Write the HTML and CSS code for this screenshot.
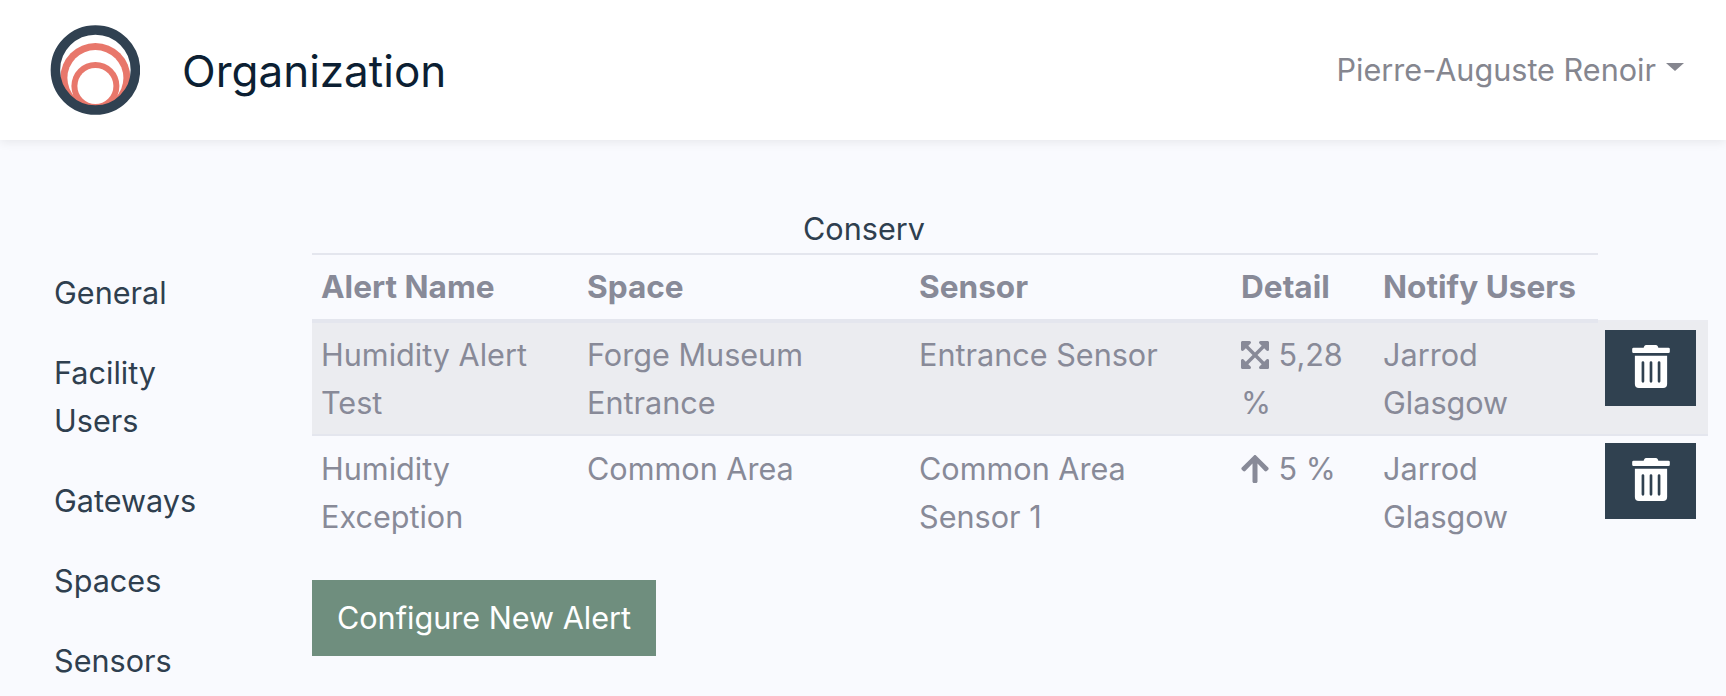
FILE: index.html

```html
<!DOCTYPE html>
<html lang="en">
<head>
  <meta charset="UTF-8" />
  <meta name="viewport" content="width=device-width, initial-scale=1.0"/>
  <title>Organization</title>
  <link rel="stylesheet" href="styles.css">
</head>
<body>
  <header class="topbar">
    <a class="brand" href="#">
      <svg class="brand-logo" viewBox="0 0 90 90" width="90" height="90">
        <circle cx="45.4" cy="53" r="35" fill="#e8776b"/>
        <circle cx="45.4" cy="53" r="28" fill="#fff"/>
        <circle cx="45.4" cy="61" r="24" fill="#e8776b"/>
        <circle cx="45.4" cy="61" r="18" fill="#fff"/>
        <circle cx="45.4" cy="45" r="40" fill="none" stroke="#304151" stroke-width="9.5"/>
      </svg>
      <span class="brand-name">Organization</span>
    </a>
    <a class="user-menu" href="#">Pierre-Auguste Renoir<span class="caret"></span></a>
  </header>

  <div class="page">
    <nav class="sidebar">
      <a href="#">General</a>
      <a href="#">Facility Users</a>
      <a href="#">Gateways</a>
      <a href="#">Spaces</a>
      <a href="#">Sensors</a>
    </nav>

    <main class="content">
      <div class="table-title">Conserv</div>
      <table class="alerts">
        <thead>
          <tr>
            <th class="col-name">Alert Name</th>
            <th class="col-space">Space</th>
            <th class="col-sensor">Sensor</th>
            <th class="col-detail">Detail</th>
            <th class="col-users">Notify Users</th>
            <th class="col-action"></th>
          </tr>
        </thead>
        <tbody>
          <tr class="hover">
            <td>Humidity Alert Test</td>
            <td>Forge Museum Entrance</td>
            <td>Entrance Sensor</td>
            <td>
              <svg class="icon" viewBox="0 0 448 512"><path d="M448.1 344v112c0 13.3-10.7 24-24 24h-112c-21.4 0-32.1-25.9-17-41l36.2-36.2L224 295.6 116.8 402.9 153 439c15.1 15.1 4.4 41-17 41H24c-13.3 0-24-10.7-24-24V344c0-21.4 25.9-32.1 41-17l36.2 36.2L184.5 256 77.2 148.7 41 185c-15.1 15.1-41 4.4-41-17V56c0-13.3 10.7-24 24-24h112c21.4 0 32.1 25.9 17 41l-36.2 36.2L224 216.4l107.3-107.3L295.1 73c-15.1-15.1-4.4-41 17-41h112c13.3 0 24 10.7 24 24v112c0 21.4-25.9 32.1-41 17l-36.2-36.2L263.6 256l107.3 107.3 36.2-36.2c15.1-15.2 41-4.5 41 16.9z"/></svg>
              5,28 %
            </td>
            <td>Jarrod Glasgow</td>
            <td class="action">
              <button class="btn-delete">
                <svg viewBox="0 0 448 512" width="38" height="43"><path d="M32 464a48 48 0 0 0 48 48h288a48 48 0 0 0 48-48V128H32zm272-256a16 16 0 0 1 32 0v224a16 16 0 0 1-32 0zm-96 0a16 16 0 0 1 32 0v224a16 16 0 0 1-32 0zm-96 0a16 16 0 0 1 32 0v224a16 16 0 0 1-32 0zM432 32H312l-9.4-18.7A24 24 0 0 0 281.1 0H166.8a23.72 23.72 0 0 0-21.4 13.3L136 32H16A16 16 0 0 0 0 48v32a16 16 0 0 0 16 16h416a16 16 0 0 0 16-16V48a16 16 0 0 0-16-16z"/></svg>
              </button>
            </td>
          </tr>
          <tr>
            <td>Humidity Exception</td>
            <td>Common Area</td>
            <td>Common Area Sensor 1</td>
            <td>
              <svg class="icon" viewBox="0 0 448 512"><path d="M34.9 289.5l-22.2-22.2c-9.4-9.4-9.4-24.6 0-33.9L207 39c9.4-9.4 24.6-9.4 33.9 0l194.3 194.3c9.4 9.4 9.4 24.6 0 33.9L413 289.4c-9.5 9.5-25 9.3-34.3-.4L264 168.6V456c0 13.3-10.7 24-24 24h-32c-13.3 0-24-10.7-24-24V168.6L69.2 289.1c-9.3 9.8-24.8 10-34.3.4z"/></svg>
              5 %
            </td>
            <td>Jarrod Glasgow</td>
            <td class="action">
              <button class="btn-delete">
                <svg viewBox="0 0 448 512" width="38" height="43"><path d="M32 464a48 48 0 0 0 48 48h288a48 48 0 0 0 48-48V128H32zm272-256a16 16 0 0 1 32 0v224a16 16 0 0 1-32 0zm-96 0a16 16 0 0 1 32 0v224a16 16 0 0 1-32 0zm-96 0a16 16 0 0 1 32 0v224a16 16 0 0 1-32 0zM432 32H312l-9.4-18.7A24 24 0 0 0 281.1 0H166.8a23.72 23.72 0 0 0-21.4 13.3L136 32H16A16 16 0 0 0 0 48v32a16 16 0 0 0 16 16h416a16 16 0 0 0 16-16V48a16 16 0 0 0-16-16z"/></svg>
              </button>
            </td>
          </tr>
        </tbody>
      </table>
      <button class="btn-new">Configure New Alert</button>
    </main>
  </div>
</body>
</html>
```

FILE: styles.css

```css
* {
  box-sizing: border-box;
}
html, body {
  height: 100%;
}
body {
  font-family: Inter, 'Noto Sans', sans-serif;
  font-size: 30.6px;
  line-height: 48px;
  background: #f9fafe;
  margin: 0;
  color: #2f3f4f;
  overflow: hidden;
}
a {
  color: inherit;
  text-decoration: none;
}
.topbar {
  height: 140px;
  background: #fff;
  box-shadow: 0 2px 10px rgba(0,0,0,0.08);
  display: flex;
  align-items: center;
  justify-content: space-between;
  padding: 0 42px 0 50px;
}
.brand {
  display: flex;
  align-items: center;
  gap: 42px;
}
.brand-logo {
  display: block;
}
.brand-name {
  font-size: 44px;
  color: #0c1f33;
  padding-top: 2px;
}
.user-menu {
  color: #85868f;
  display: flex;
  align-items: center;
}
.caret {
  width: 0;
  height: 0;
  margin-left: 10px;
  margin-bottom: 6px;
  border-top: 8px solid #85868f;
  border-left: 9.5px solid transparent;
  border-right: 9.5px solid transparent;
}
.page {
  display: flex;
}
.sidebar {
  width: 312px;
  flex: none;
  padding: 129px 80px 0 54px;
  display: flex;
  flex-direction: column;
  gap: 32px;
}
.content {
  width: 1396px;
  padding-top: 65px;
}
.table-title {
  width: 1104px;
  text-align: center;
}
.alerts {
  width: 100%;
  table-layout: fixed;
  border-collapse: collapse;
  color: #888a98;
}
.alerts th {
  text-align: left;
  font-size: 31.6px;
  font-weight: 700;
  padding: 8px 9px;
  border-top: 2px solid #e4e6ee;
  border-bottom: 4px solid #e4e6ee;
}
.alerts .col-name { width: 266px; }
.alerts .col-space { width: 332px; }
.alerts .col-sensor { width: 322px; }
.alerts .col-detail { width: 142px; }
.alerts .col-users { width: 224px; }
.alerts .col-action {
  width: 110px;
  border-top: 0;
  border-bottom: 2px solid #ebecf1;
}
.alerts td {
  padding: 8px 9px;
  vertical-align: top;
  border-bottom: 2px solid #e4e6ee;
}
.alerts .hover td {
  padding-bottom: 7px;
}
.alerts tbody tr:last-child td {
  padding-top: 9px;
  border-bottom: 0;
}
.alerts .hover {
  background: #ebecf0;
}
.alerts td.action {
  padding: 8px 12px 0 7px;
}
.alerts tbody tr:last-child td.action {
  padding-top: 7px;
}
.icon {
  width: 28px;
  height: 32px;
  fill: #888a98;
  vertical-align: -5px;
  margin-right: 1px;
}
.btn-delete {
  display: flex;
  align-items: center;
  justify-content: center;
  width: 91px;
  height: 76px;
  padding: 0 0 4px;
  border: 0;
  background: #304150;
  fill: #fff;
}
.btn-new {
  display: block;
  margin-top: 31px;
  width: 344px;
  height: 76px;
  padding: 0;
  border: 0;
  font: inherit;
  background: #6f8e7e;
  color: #fff;
}
```
